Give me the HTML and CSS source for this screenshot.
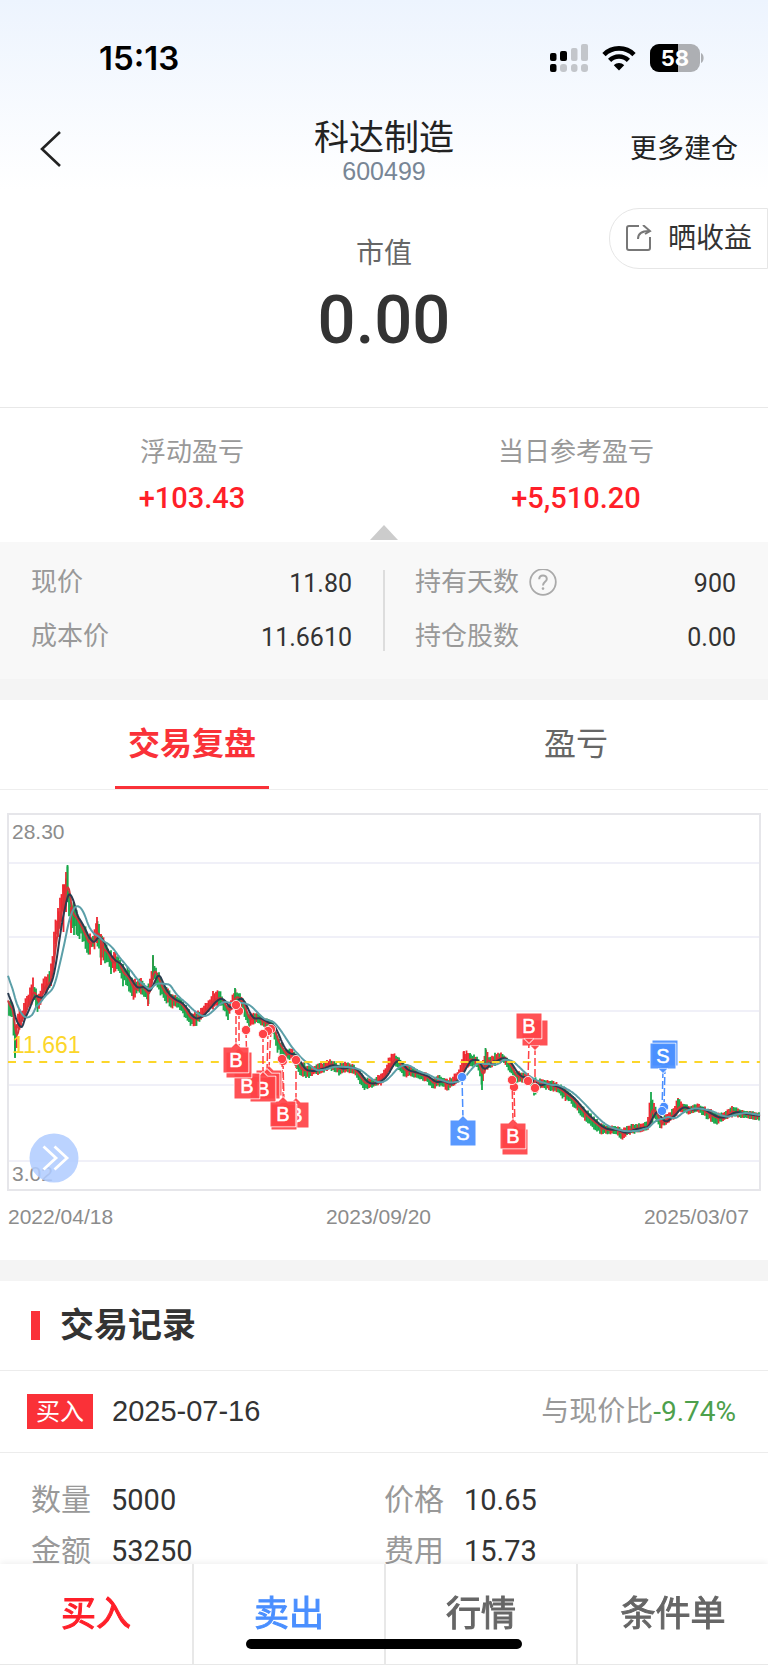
FILE: index.html
```html
<!DOCTYPE html>
<html lang="zh-CN">

<head>
    <meta charset="utf-8">
    <meta name="viewport" content="width=device-width, initial-scale=1">
    <title>科达制造 600499</title>
    <link rel="stylesheet" href="styles.css">
</head>

<body>

    <header class="top">
        <div class="status">
            <span class="clock">15:13</span>
            <div class="status-icons">
                <svg width="38" height="28" viewBox="0 0 38 28">
                    <g fill="#000">
                        <rect x="0" y="9" width="6.5" height="8" rx="2" />
                        <rect x="10" y="7" width="7" height="10" rx="2" />
                        <rect x="0" y="20" width="6.5" height="8" rx="2" />
                    </g>
                    <g fill="#c3c6cb">
                        <rect x="21" y="4" width="6.5" height="13" rx="2" />
                        <rect x="31" y="0" width="7" height="17" rx="2" />
                        <rect x="10" y="20" width="7" height="8" rx="3" />
                        <rect x="21" y="20" width="6.5" height="8" rx="3" />
                        <rect x="31" y="20" width="7" height="8" rx="3" />
                    </g>
                </svg>
                <svg width="34" height="26" viewBox="0 0 34 26">
                    <g fill="none" stroke="#000" stroke-width="4.6">
                        <path d="M2 9.6 C10 1.3 24 1.3 32 9.6" />
                        <path d="M7.6 15.4 C13 10.2 21 10.2 26.4 15.4" />
                    </g>
                    <path d="M17 25.5 L11.8 20.2 C14.8 17.4 19.2 17.4 22.2 20.2 Z" fill="#000" />
                </svg>
                <svg width="54" height="28" viewBox="0 0 54 28">
                    <rect width="50" height="28" rx="9" fill="#adafb3" />
                    <path d="M9 0 H28 V28 H9 A9 9 0 0 1 0 19 V9 A9 9 0 0 1 9 0 Z" fill="#000" />
                    <path d="M51 9 C54.5 10.5 54.5 17.5 51 19 Z" fill="#adafb3" />
                    <text x="25" y="22" class="battery-text">58</text>
                </svg>
            </div>
        </div>
        <div class="navbar">
            <button class="back" aria-label="返回">
                <svg width="22" height="38" viewBox="0 0 22 38">
                    <path d="M20 2 L2 19 L20 36" fill="none" stroke="#222" stroke-width="2.6" />
                </svg>
            </button>
            <div class="stock">
                <h1>科达制造</h1>
                <span>600499</span>
            </div>
            <a href="#" class="more">更多建仓</a>
        </div>
    </header>

    <section class="hero">
        <button class="share">
            <svg width="27" height="28" viewBox="0 0 27 28">
                <g fill="none" stroke="#777" stroke-width="2">
                    <path d="M14 1 H4 Q2 1 2 3 V23 Q2 25 4 25 H23 Q25 25 25 23 V12" />
                    <path d="M13 14 C13 9 17 6 24 6" />
                    <path d="M18 0 L25 6 L20 9" />
                </g>
            </svg>
            晒收益
        </button>
        <p class="hero-label">市值</p>
        <p class="hero-value">0.00</p>
    </section>

    <section class="profit">
        <div>
            <p class="label">浮动盈亏</p>
            <p class="profit-value">+103.43</p>
        </div>
        <div>
            <p class="label">当日参考盈亏</p>
            <p class="profit-value">+5,510.20</p>
        </div>
        <i class="arrow"></i>
    </section>

    <section class="detail">
        <dl class="detail-col">
            <div><dt>现价</dt><dd>11.80</dd></div>
            <div><dt>成本价</dt><dd>11.6610</dd></div>
        </dl>
        <dl class="detail-col">
            <div>
                <dt>持有天数
                    <svg class="help" width="28" height="28" viewBox="0 0 28 28">
                        <circle cx="14" cy="13" r="12.8" fill="none" stroke="#aaa" stroke-width="1.8" />
                        <path d="M10.2 10.2 C10.2 5.2 17.8 5.2 17.8 10 C17.8 12.8 14 13 14 16.4" fill="none" stroke="#aaa" stroke-width="2" />
                        <circle cx="14" cy="19.6" r="1.3" fill="#aaa" />
                    </svg>
                </dt>
                <dd>900</dd>
            </div>
            <div><dt>持仓股数</dt><dd>0.00</dd></div>
        </dl>
    </section>

    <nav class="tabs">
        <button class="tab active">交易复盘</button>
        <button class="tab">盈亏</button>
    </nav>

    <section class="chart">
        <svg id="kline" viewBox="0 0 768 380">
            <g stroke="#f0f0f8" stroke-width="2">
                <path d="M8 51 H760 M8 125 H760 M8 199 H760 M8 273 H760 M8 349 H760" />
            </g>
            <rect x="8" y="2" width="752" height="376" fill="none" stroke="#e6e6ea" stroke-width="2" />
            <g id="candles" stroke-width="1.8"></g>
            <g id="averages" fill="none" stroke-width="2" stroke-linejoin="round"></g>
            <path d="M8 250 H760" stroke="#fcd62a" stroke-width="2" stroke-dasharray="8 7.6" />
            <text x="12" y="27" class="axis">28.30</text>
            <text x="12" y="369" class="axis">3.02</text>
            <text x="12" y="241" class="cost">11.661</text>
            <g id="markers"></g>
            <g id="forward">
                <circle cx="54" cy="346" r="24.5" fill="#b0ccff" fill-opacity="0.86" />
                <path d="M43.5 334.5 L56 346 L43.5 357.5 M54.5 334.5 L67 346 L54.5 357.5" fill="none" stroke="#fff" stroke-width="2.8" />
            </g>
        </svg>
        <div class="dates">
            <span>2022/04/18</span>
            <span>2023/09/20</span>
            <span>2025/03/07</span>
        </div>
    </section>

    <section class="records">
        <h2>交易记录</h2>
        <div class="record-head">
            <span class="badge">买入</span>
            <span class="record-date">2025-07-16</span>
            <span class="compare">与现价比<b>-9.74%</b></span>
        </div>
        <dl class="record-body">
            <div><dt>数量</dt><dd>5000</dd></div>
            <div><dt>价格</dt><dd>10.65</dd></div>
            <div><dt>金额</dt><dd>53250</dd></div>
            <div><dt>费用</dt><dd>15.73</dd></div>
        </dl>
    </section>

    <footer class="actions">
        <button class="buy">买入</button>
        <button class="sell">卖出</button>
        <button>行情</button>
        <button>条件单</button>
        <i class="home-bar"></i>
    </footer>

    <script src="chart.js"></script>
</body>

</html>
```
FILE: styles.css
```css
* {
    box-sizing: border-box;
}

body {
    margin: 0;
    min-height: 100vh;
    padding-bottom: 80px;
    background-color: #fff;
    color: #333;
    font-family: "Liberation Sans", "Noto Sans CJK SC", sans-serif;
    line-height: 1.2;
}

h1, h2, p, dl, dd {
    margin: 0;
    font-weight: normal;
}

button {
    border: none;
    padding: 0;
    background: none;
    color: inherit;
    font-family: inherit;
    line-height: inherit;
}

svg {
    display: block;
}

/* header */
.top {
    background: linear-gradient(#edf4fe, #fff);
}

.status {
    height: 108px;
    padding: 8px 64px 0 99px;
    display: flex;
    align-items: center;
    justify-content: space-between;
}

.clock {
    font: 600 33px Inter, sans-serif;
    color: #000;
}

.status-icons {
    display: flex;
    align-items: center;
    gap: 14px;
}

.battery-text {
    font: 700 22px Inter, sans-serif;
    fill: #fff;
    text-anchor: middle;
}

.navbar {
    height: 82px;
    padding: 0 30px 0 40px;
    display: grid;
    grid-template-columns: 1fr auto 1fr;
    align-items: center;
}

.back {
    justify-self: start;
}

.stock {
    text-align: center;
    padding: 4px 10px 0 0;
}

.stock h1 {
    font-size: 35px;
    line-height: 40px;
    color: #222;
}

.stock span {
    display: block;
    font-size: 25px;
    line-height: 26px;
    color: #788696;
}

.more {
    justify-self: end;
    font-size: 27px;
    color: #222;
    text-decoration: none;
}

/* market value */
.hero {
    position: relative;
    padding: 44px 0 47px;
    border-bottom: 1px solid #e8e8e8;
    text-align: center;
}

.share {
    position: absolute;
    top: 18px;
    right: 0;
    height: 61px;
    padding: 0 15px;
    display: flex;
    align-items: center;
    gap: 16px;
    border: 1px solid #e6e6e6;
    border-radius: 30px 0 0 30px;
    background-color: #fff;
    font-size: 28px;
}

.hero-label {
    font-size: 28px;
    line-height: 40px;
    color: #666;
}

.hero-value {
    margin-top: 6px;
    font: 500 67px/80px Roboto, sans-serif;
}

.profit {
    position: relative;
    display: grid;
    grid-template-columns: 1fr 1fr;
    padding: 27px 0 24px;
    text-align: center;
}

.label {
    font-size: 26px;
    line-height: 34px;
    color: #999;
}

.profit-value {
    margin-top: 9px;
    font: 500 29px/40px Roboto, sans-serif;
    color: #ff1f29;
}

.arrow {
    position: absolute;
    left: calc(50% - 14px);
    bottom: 2px;
    border: 14px solid transparent;
    border-top: 0;
    border-bottom: 15px solid #ccc;
}

/* price and position */
.detail {
    display: grid;
    grid-template-columns: 1fr 1fr;
    padding: 14px 0 15px;
    border-bottom: 21px solid #f4f4f4;
    background: linear-gradient(#ddd, #ddd) 50% 28px / 2px 81px no-repeat #f8f8f8;
}

.detail-col {
    padding: 0 32px 0 31px;
}

.detail-col div {
    height: 54px;
    display: flex;
    align-items: center;
    justify-content: space-between;
}

.detail-col dt {
    display: flex;
    align-items: center;
    gap: 10px;
    font-size: 26px;
    color: #999;
}

.detail-col dd {
    font: 25px Roboto, sans-serif;
}

/* tabs */
.tabs {
    display: grid;
    grid-template-columns: 1fr 1fr;
    justify-items: center;
    border-bottom: 1px solid #eee;
}

.tab {
    height: 89px;
    padding: 3px 13px 0;
    border-bottom: 3px solid transparent;
    font-size: 32px;
    color: #666;
}

.tab.active {
    border-color: #fa3138;
    color: #fa3138;
    font-weight: bold;
}

/* chart */
.chart {
    padding: 22px 0 26px;
    border-bottom: 21px solid #f4f4f4;
}

#kline {
    width: 100%;
}

.axis {
    font-size: 21px;
    fill: #8c8c8c;
}

.cost {
    font-size: 23px;
    fill: #fcd62a;
}

.mark-text {
    font-size: 20px;
    fill: #fff;
    stroke: #fff;
    stroke-width: 0.5;
    text-anchor: middle;
}

.dates {
    display: flex;
    justify-content: space-between;
    margin-top: 8px;
    padding: 0 19px 0 8px;
    font-size: 21px;
    line-height: 34px;
    color: #8c8c8c;
}

/* trade records */
.records h2 {
    display: flex;
    align-items: center;
    gap: 20px;
    height: 90px;
    padding-left: 31px;
    border-bottom: 1px solid #ececec;
    font-size: 34px;
    font-weight: bold;
}

.records h2::before {
    content: "";
    width: 9px;
    height: 29px;
    background-color: #fa3138;
}

.record-head {
    display: flex;
    align-items: center;
    height: 82px;
    padding: 0 32px 0 27px;
    border-bottom: 1px solid #ececec;
}

.badge {
    padding: 0 9px;
    background-color: #fa3138;
    color: #fff;
    font-size: 24px;
    line-height: 35px;
}

.record-date {
    margin-left: 19px;
    font-size: 29px;
}

.compare {
    margin-left: auto;
    font-size: 28px;
    color: #999;
}

.compare b {
    font: 28px/1 Roboto, sans-serif;
    color: #4da04c;
}

.record-body {
    display: grid;
    grid-template-columns: 1fr 1fr;
    padding-top: 21px;
}

.record-body div {
    display: flex;
    align-items: center;
    gap: 20px;
    height: 51px;
}

.record-body div:nth-child(odd) {
    padding-left: 31px;
}

.record-body dt {
    font-size: 30px;
    color: #999;
}

.record-body dd {
    font: 29px Roboto, sans-serif;
}

/* bottom bar */
.actions {
    position: fixed;
    left: 0;
    right: 0;
    bottom: 0;
    height: 101px;
    display: grid;
    grid-template-columns: repeat(4, 1fr);
    border-bottom: 1px solid #e8e8e8;
    background-color: #fff;
    box-shadow: 0 -2px 6px rgba(0, 0, 0, 0.06);
}

.actions button {
    font-size: 35px;
    color: #666;
    border-left: 2px solid #e8e8e8;
    -webkit-text-stroke: 1px;
}

.actions button:first-child {
    border-left: none;
}

.actions .buy {
    color: #ff1f29;
}

.actions .sell {
    color: #4a8fff;
}

.home-bar {
    position: absolute;
    left: 32%;
    right: 32%;
    bottom: 15px;
    height: 10px;
    border-radius: 5px;
    background-color: #000;
}
```
FILE: chart.js
```javascript
var NS = "http://www.w3.org/2000/svg";

// price range along the x axis: [x, high, low]
var range = [
    [-22, 90, 110], [-12, 120, 140], [0, 160, 178], [8, 185, 201], [12, 188, 208], [15, 215, 246], [18, 201, 221],
    [22, 196, 215], [27, 185, 201], [33, 168, 188], [38, 185, 201], [43, 166, 185], [50, 161, 178],
    [53, 131, 161], [55, 111, 145], [58, 98, 121], [63, 68, 105], [67, 53, 88], [71, 88, 115],
    [75, 93, 118], [80, 103, 125], [88, 121, 143], [93, 121, 138], [97, 105, 131], [101, 121, 151],
    [107, 131, 151], [111, 141, 161], [117, 143, 155], [122, 151, 171], [127, 155, 175], [133, 171, 185],
    [140, 165, 181], [148, 175, 192], [153, 145, 168], [158, 158, 178], [163, 175, 185], [170, 181, 193],
    [180, 188, 195], [190, 201, 213], [197, 201, 211], [203, 198, 203], [213, 181, 195], [220, 181, 190],
    [228, 195, 205], [235, 177, 191], [242, 185, 195], [248, 201, 214], [257, 203, 208], [263, 208, 212],
    [272, 211, 216], [277, 221, 238], [285, 240, 245], [293, 238, 245], [300, 251, 264], [310, 256, 263],
    [323, 253, 258], [330, 249, 255], [339, 254, 261], [347, 252, 257], [355, 256, 261], [364, 267, 276],
    [373, 270, 273], [383, 261, 270], [390, 245, 258], [395, 243, 250], [403, 253, 263], [417, 260, 263],
    [427, 263, 268], [433, 269, 275], [438, 265, 271], [448, 270, 276], [455, 264, 271], [460, 258, 268],
    [464, 240, 260], [470, 243, 251], [477, 246, 253], [482, 254, 276], [486, 238, 255], [490, 248, 255],
    [497, 242, 250], [503, 244, 248], [510, 250, 258], [515, 260, 268], [522, 263, 268], [530, 265, 270],
    [535, 268, 283], [540, 268, 275], [547, 270, 275], [557, 273, 278], [563, 276, 285], [570, 283, 288],
    [585, 299, 307], [600, 312, 320], [607, 316, 320], [615, 316, 319], [622, 319, 325], [630, 315, 320],
    [639, 314, 318], [647, 312, 317], [651, 281, 311], [655, 295, 305], [660, 308, 316], [665, 305, 311],
    [672, 300, 306], [678, 288, 301], [683, 294, 297], [689, 296, 301], [698, 294, 297], [707, 298, 305],
    [717, 303, 310], [725, 303, 305], [731, 296, 303], [743, 301, 303], [760, 303, 306]
];

// single long candles: [x, high, low, up]
var spikes = [
    [15, 214, 246, 0], [58, 96, 125, 1], [63.5, 73, 120, 1], [66, 60, 100, 1], [67.5, 53, 90, 0], [71, 95, 121, 1],
    [74, 96, 123, 0], [97, 105, 131, 1], [101, 122, 153, 1], [111, 145, 162, 0], [153, 143, 168, 0],
    [148, 175, 194, 1], [235, 176, 192, 0], [464, 239, 262, 1], [470, 241, 252, 0], [482, 256, 278, 0],
    [485.5, 236, 256, 0], [651, 280, 304, 0], [678, 287, 300, 0]
];

// trades: [letter, dot x, dot y, box x, box y], no letter on boxes covered by the next one
var trades = [
    ["B", 296, 248, 296, 303], ["", 283, 249, 284, 305], ["B", 282, 247, 283, 302],
    ["", 271, 217, 269, 271], ["", 268, 219, 267, 274], ["B", 263, 222, 263, 277],
    ["B", 246, 218, 247, 274], ["", 239, 199, 239, 253], ["B", 236, 193, 236, 248],
    ["S", 462, 265, 463, 321], ["", 514, 275, 515, 330], ["B", 512, 268, 513, 324],
    ["", 535, 276, 535, 221], ["B", 528, 269, 529, 214],
    ["", 664, 295, 665, 241], ["S", 662, 299, 663, 244]
];

function add(parent, name, attrs) {
    var el = document.createElementNS(NS, name);
    for (var key in attrs) {
        el.setAttribute(key, attrs[key]);
    }
    document.getElementById(parent).appendChild(el);
    return el;
}

var seed = 7;
function random() {
    seed = (seed * 16807) % 2147483647;
    return seed / 2147483647;
}

function rangeAt(x) {
    var i = 1;
    while (i < range.length - 1 && range[i][0] < x) {
        i++;
    }
    var a = range[i - 1], b = range[i];
    var t = (x - a[0]) / (b[0] - a[0]);
    return [a[1] + (b[1] - a[1]) * t, a[2] + (b[2] - a[2]) * t];
}

function drawCandle(x, high, low, up) {
    add("candles", "path", {
        d: "M" + x + " " + high.toFixed(1) + "V" + low.toFixed(1),
        stroke: up ? "#ee2730" : "#17a84a"
    });
}

function drawCandles() {
    var last = 190;
    for (var x = 9; x < 760; x += 1.5) {
        var r = rangeAt(x);
        var size = r[1] - r[0];
        var mid = (r[0] + r[1]) / 2 + (random() - 0.5) * 3;
        drawCandle(x, r[0] - 3 + random() * size * 0.4, r[1] + 3 - random() * size * 0.4, mid < last);
        last = mid;
    }
    spikes.forEach(function (s) {
        drawCandle(s[0], s[1], s[2], s[3]);
    });
}

function drawAverage(days, color) {
    var d = "";
    for (var x = 8; x <= 760; x += 1) {
        var sum = 0;
        for (var k = 0; k < days; k++) {
            var r = rangeAt(x - k);
            sum += (r[0] + r[1]) / 2;
        }
        d += (d ? "L" : "M") + x + " " + (sum / days).toFixed(1);
    }
    add("averages", "path", { d: d, stroke: color });
}

function drawTrade(t) {
    // sells are the ones right of x 600 and the one at 462
    var sell = t[1] > 600 || t[1] == 462;
    var color = sell ? "#4a8fff" : "#ff4246";
    var x = t[3], y = t[4];
    var dir = y > t[2] ? -1 : 1;
    add("markers", "path", {
        d: "M" + t[1] + " " + t[2] + "L" + x + " " + (y + dir * 14),
        stroke: color, "stroke-width": 1.5, "stroke-dasharray": "8 3"
    });
    add("markers", "circle", { cx: t[1], cy: t[2], r: 4.6, fill: color, stroke: "#fff", "stroke-width": 0.8 });
    add("markers", "path", {
        d: "M" + (x - 12.5) + " " + (y - 12.5) + "h25v25h-25z" +
            "M" + (x - 5) + " " + (y + dir * 12) + "L" + x + " " + (y + dir * 17) + "L" + (x + 5) + " " + (y + dir * 12) + "z",
        fill: color, stroke: "#fff", "stroke-width": 1.6, "stroke-linejoin": "round",
        "paint-order": "stroke", "fill-opacity": 0.92
    });
    if (t[0]) {
        add("markers", "text", { x: x, y: y + 7, "class": "mark-text" }).textContent = t[0];
    }
}

drawCandles();
drawAverage(4, "#d2363a");
drawAverage(9, "#2a3c50");
drawAverage(20, "#5b9fa8");
trades.forEach(drawTrade);
```
